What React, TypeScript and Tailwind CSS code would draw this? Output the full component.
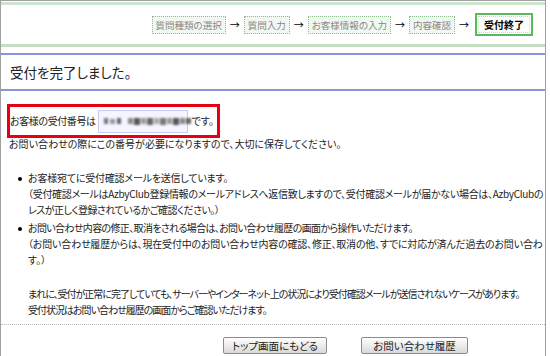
import React from 'react';

const steps = ['質問種類の選択', '質問入力', 'お客様情報の入力', '内容確認'];

const Arrow = () => <span className="mx-[4px] text-[10px] text-black">→</span>;

const BlurNumber = () => (
  <div className="ml-[2px] flex h-[23px] w-[90px] items-center border border-[#c9c9ef] bg-[#f5f5ff] px-[5px]">
    <div className="flex items-center gap-[2px] blur-[1.2px]">
      <div className="h-[6px] w-[4px] bg-[#777]" />
      <div className="h-[5px] w-[5px] bg-[#999]" />
      <div className="h-[6px] w-[4px] bg-[#666]" />
    </div>
    <div className="ml-[7px] flex items-center gap-[1px] blur-[1.2px]">
      <div className="h-[6px] w-[5px] bg-[#888]" />
      <div className="h-[7px] w-[6px] bg-[#555]" />
      <div className="h-[6px] w-[5px] bg-[#999]" />
      <div className="h-[7px] w-[6px] bg-[#666]" />
      <div className="h-[6px] w-[5px] bg-[#aaa]" />
      <div className="h-[7px] w-[6px] bg-[#777]" />
      <div className="h-[6px] w-[5px] bg-[#999]" />
      <div className="h-[7px] w-[6px] bg-[#555]" />
      <div className="h-[6px] w-[5px] bg-[#888]" />
      <div className="h-[6px] w-[5px] bg-[#666]" />
    </div>
  </div>
);

type Line = { text: string; track: string };

const Bullet = ({ lines }: { lines: Line[] }) => (
  <li className="flex">
    <div className="ml-[17px] mr-[6px] mt-[7px] h-[4px] w-[4px] shrink-0 rounded-full bg-black" />
    <div>
      {lines.map((l) => (
        <div key={l.text} className={`whitespace-nowrap ${l.track}`}>
          {l.text}
        </div>
      ))}
    </div>
  </li>
);

const Button = ({ label, w }: { label: string; w: string }) => (
  <button
    className={`${w} h-[17px] rounded-[2px] border border-[#8a8a8a] bg-gradient-to-b from-white to-[#d9d9d9] text-[10.5px] leading-[15px] text-[#222]`}
  >
    {label}
  </button>
);

export default function App() {
  return (
    <div className="h-[356px] w-[550px] bg-white font-['Noto_Sans_CJK_JP',sans-serif] text-[#333] [font-feature-settings:'palt']">
      <div className="h-[356px] w-[546px] overflow-hidden border-l border-r border-t border-[#a0a0a0]">
        <div className="mt-[1px] h-[3px] bg-[#cde5cd]" />
        <div className="flex h-[39px] items-center justify-end pr-[12px]">
          {steps.map((s) => (
            <React.Fragment key={s}>
              <span className="border border-dotted border-[#8cbf8c] bg-[#f1f8f1] px-[3px] text-[9.5px] leading-[16px] text-[#888]">
                {s}
              </span>
              <Arrow />
            </React.Fragment>
          ))}
          <span className="ml-[2px] border-2 border-[#5cb85c] bg-white p-[1px]">
            <span className="block border border-dotted border-[#bfe0bf] bg-[#fbfefb] px-[5px] text-[10px] font-bold leading-[15px] text-black">
              受付終了
            </span>
          </span>
        </div>
        <div className="h-[3px] bg-[#c4dfc4]" />
        <div className="h-[6px]" />
        <div className="h-[2px] bg-[#8b93d8]" />
        <div className="flex h-[34px] items-center pl-[9px] text-[13.5px] text-[#222]">受付を完了しました。</div>
        <div className="h-[2px] bg-[#8b93d8]" />

        <div className="pl-[6px] pt-[13px] text-[10px] leading-[16px]">
          <div className="inline-flex h-[34px] items-center border-[3px] border-[#e60012] pr-[3px] text-[#222]">
            <span className="tracking-[-0.4px]">お客様の受付番号は</span>
            <BlurNumber />
            <span className="ml-[4px]">です。</span>
          </div>
          <div className="-mt-[2px] pl-[2px] text-[#222]">
            お問い合わせの際にこの番号が必要になりますので、大切に保存してください。
          </div>

          <ul className="mt-[18px] -ml-[6px] flex flex-col gap-[2px] text-[#222]">
            <Bullet
              lines={[
                { text: 'お客様宛てに受付確認メールを送信しています。', track: 'tracking-[-0.2px]' },
                {
                  text: '（受付確認メールはAzbyClub登録情報のメールアドレスへ返信致しますので、受付確認メールが届かない場合は、AzbyClubの',
                  track: 'tracking-[-0.3px]',
                },
                { text: 'レスが正しく登録されているかご確認ください。）', track: 'tracking-[-0.5px]' },
              ]}
            />
            <Bullet
              lines={[
                {
                  text: 'お問い合わせ内容の修正、取消をされる場合は、お問い合わせ履歴の画面から操作いただけます。',
                  track: 'tracking-[-0.65px]',
                },
                {
                  text: '（お問い合わせ履歴からは、現在受付中のお問い合わせ内容の確認、修正、取消の他、すでに対応が済んだ過去のお問い合わ',
                  track: 'tracking-[-0.2px]',
                },
                { text: 'す。）', track: '' },
              ]}
            />
          </ul>

          <div className="mt-[18px] pl-[21px] text-[#222]">
            <div className="whitespace-nowrap tracking-[-1px]">
              まれに、受付が正常に完了していても、サーバーやインターネット上の状況により受付確認メールが送信されないケースがあります。
            </div>
            <div className="whitespace-nowrap tracking-[-1px]">受付状況はお問い合わせ履歴の画面からご確認いただけます。</div>
          </div>
        </div>

        <div className="mt-[6px] border-t border-dotted border-[#bbb]" />
        <div className="mt-[12px] flex gap-[34px] pl-[222px]">
          <Button label="トップ画面にもどる" w="w-[104px]" />
          <Button label="お問い合わせ履歴" w="w-[107px]" />
        </div>
      </div>
    </div>
  );
}
